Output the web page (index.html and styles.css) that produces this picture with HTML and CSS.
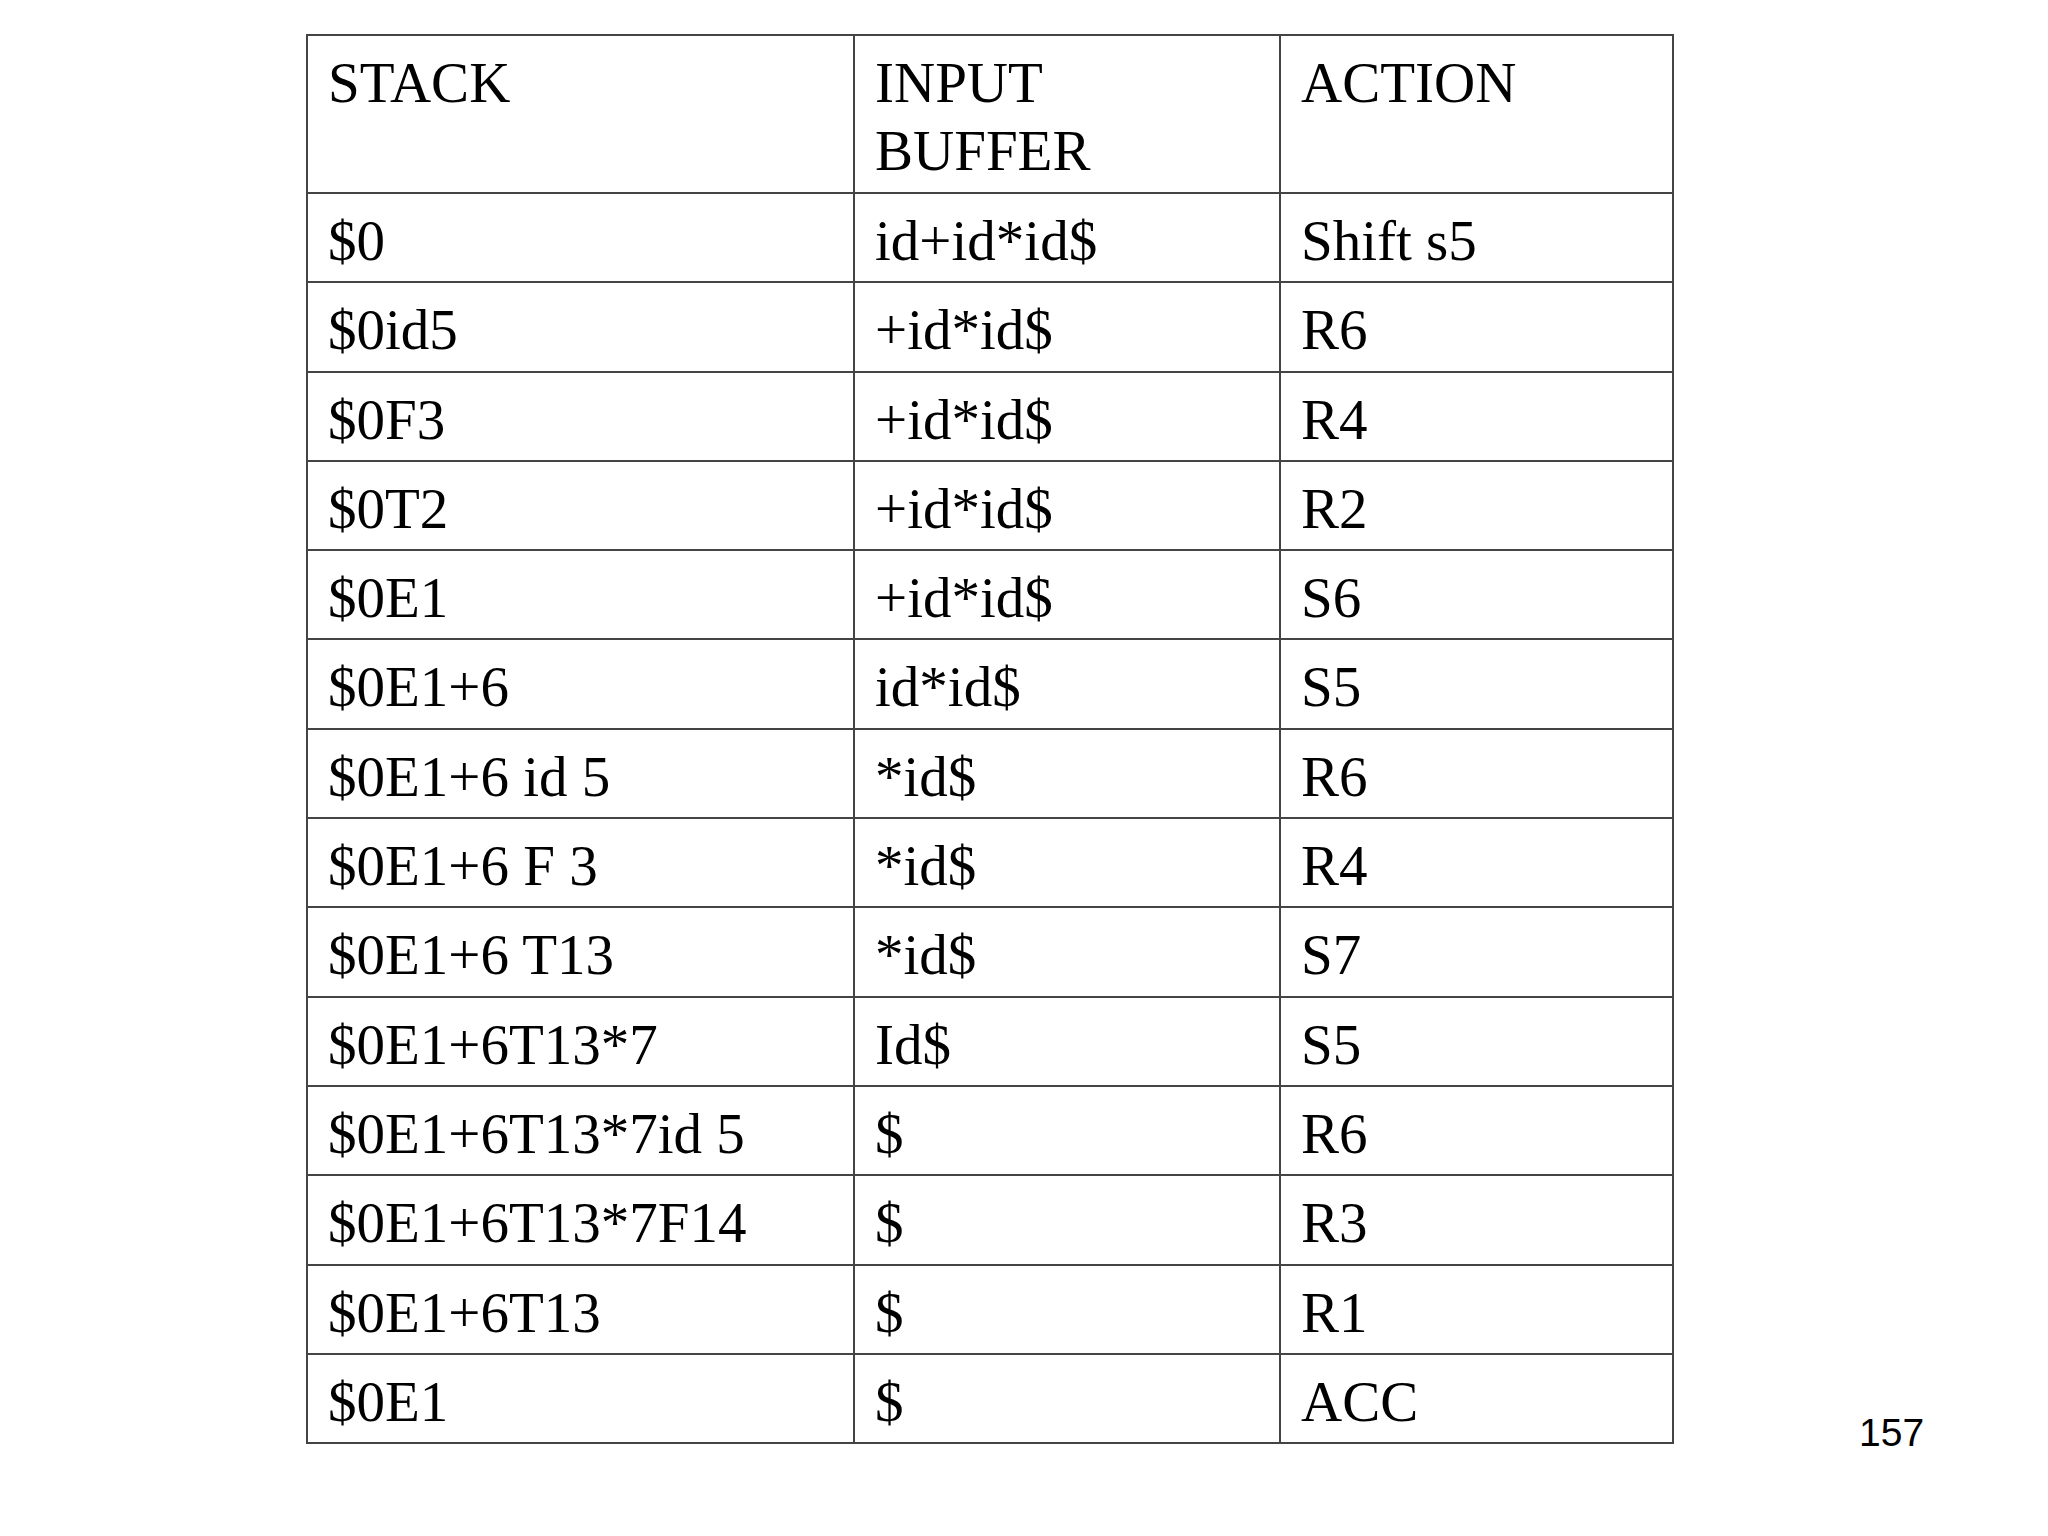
FILE: index.html
```html
<!DOCTYPE html>
<html>
<head>
<meta charset="utf-8">
<link rel="stylesheet" href="styles.css">
</head>
<body>
<div class="slide">
  <div class="row">
    <table class="parse">
      <colgroup>
        <col class="c1"><col class="c2"><col class="c3">
      </colgroup>
      <thead>
        <tr class="head"><th>STACK</th><th>INPUT<br>BUFFER</th><th>ACTION</th></tr>
      </thead>
      <tbody>
        <tr><td>$0</td><td>id+id*id$</td><td>Shift s5</td></tr>
        <tr><td>$0id5</td><td>+id*id$</td><td>R6</td></tr>
        <tr><td>$0F3</td><td>+id*id$</td><td>R4</td></tr>
        <tr><td>$0T2</td><td>+id*id$</td><td>R2</td></tr>
        <tr><td>$0E1</td><td>+id*id$</td><td>S6</td></tr>
        <tr><td>$0E1+6</td><td>id*id$</td><td>S5</td></tr>
        <tr><td>$0E1+6 id 5</td><td>*id$</td><td>R6</td></tr>
        <tr><td>$0E1+6 F 3</td><td>*id$</td><td>R4</td></tr>
        <tr><td>$0E1+6 T13</td><td>*id$</td><td>S7</td></tr>
        <tr><td>$0E1+6T13*7</td><td>Id$</td><td>S5</td></tr>
        <tr><td>$0E1+6T13*7id 5</td><td>$</td><td>R6</td></tr>
        <tr><td>$0E1+6T13*7F14</td><td>$</td><td>R3</td></tr>
        <tr><td>$0E1+6T13</td><td>$</td><td>R1</td></tr>
        <tr><td>$0E1</td><td>$</td><td>ACC</td></tr>
      </tbody>
    </table>
    <div class="pagenum">157</div>
  </div>
</div>
</body>
</html>
```
FILE: styles.css
```css
html, body {
  margin: 0;
  padding: 0;
  background: #ffffff;
}

.slide {
  width: 2048px;
  height: 1536px;
  box-sizing: border-box;
  padding: 34px 0 0 306px;
}

.row {
  display: flex;
  align-items: flex-end;
}

.parse {
  border-collapse: collapse;
  table-layout: fixed;
  width: 1366px;
  font-family: "Liberation Serif", "Times New Roman", serif;
  font-size: 57px;
  line-height: 68px;
  color: #000;
}

.c1 { width: 547px; }
.c2 { width: 426px; }
.c3 { width: 393px; }

.parse th,
.parse td {
  border: 2px solid #444;
  padding: 13px 0 0 20px;
  text-align: left;
  vertical-align: top;
  font-weight: normal;
  white-space: nowrap;
}

.parse .head { height: 158px; }
.parse tbody tr { height: 89.3px; }

.pagenum {
  margin-left: 185px;
  margin-bottom: -11px;
  font-family: "Liberation Sans", Arial, sans-serif;
  font-size: 39px;
  line-height: 44px;
  color: #000;
}
```
